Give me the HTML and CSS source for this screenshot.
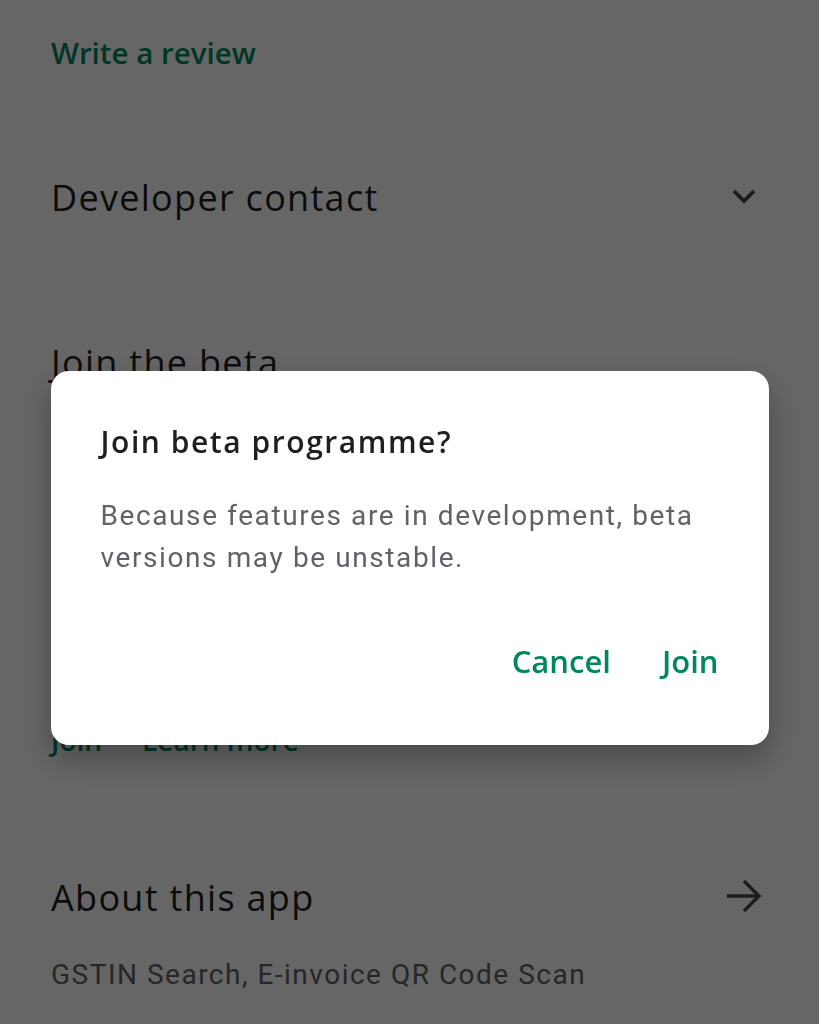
FILE: index.html
```html
<!DOCTYPE html>
<html lang="en">
<head>
    <meta charset="UTF-8">
    <meta name="viewport" content="width=device-width, initial-scale=1.0">
    <title>Join beta programme</title>
    <link rel="stylesheet" href="styles.css">
</head>
<body>
    <div class="page">
        <div class="link-row">Write a review</div>

        <div class="section-row">
            <span class="section-title">Developer contact</span>
            <svg class="chevron" viewBox="0 0 32 20" width="32" height="20">
                <path d="M8 4 18 14 28 4" fill="none" stroke="#4a4a4a" stroke-width="3.8"/>
            </svg>
        </div>

        <div class="beta">
            <div class="section-row beta-head">
                <span class="section-title">Join the beta</span>
            </div>
            <p class="beta-text">Try new features before they're officially released and give your feedback to the developer.</p>
            <div class="beta-links">
                <span>Join</span>
                <span>Learn more</span>
            </div>
        </div>

        <div class="section-row about">
            <span class="section-title">About this app</span>
            <svg class="arrow" viewBox="0 0 40 40" width="40" height="40">
                <path d="M5 19H36M22 4 37 19 22 34" fill="none" stroke="#4a4a4a" stroke-width="3.4"/>
            </svg>
        </div>
        <p class="about-text">GSTIN Search, E-invoice QR Code Scan</p>
    </div>

    <div class="overlay">
        <div class="dialog">
            <h2 class="dialog-title">Join beta programme?</h2>
            <p class="dialog-text">Because features are in development, beta versions may be unstable.</p>
            <div class="dialog-actions">
                <button class="text-btn">Cancel</button>
                <button class="text-btn">Join</button>
            </div>
        </div>
    </div>
</body>
</html>
```

FILE: styles.css
```css
html, body { margin: 0; padding: 0; background: #fff; }
body { font-family: Roboto, "Noto Sans", sans-serif; color: #1f1f1f; }

.page { padding: 0 51px; }

.link-row { height: 104px; display: flex; align-items: center; font-family: "Open Sans", sans-serif; font-size: 29.5px; font-weight: 600; color: #01875f; }

.section-row { display: flex; align-items: center; justify-content: space-between; height: 80px; margin-top: 53px; }
.section-title { font-family: "Open Sans", sans-serif; font-size: 36px; font-weight: 400; letter-spacing: 1.3px; color: #1f1f1f; }
.chevron { margin-right: 10px; }
.arrow { margin-right: 6px; }

.beta { margin-top: 85px; height: 438px; display: flex; flex-direction: column; }
.beta-head { margin-top: 0; }
.beta-text { font-size: 28px; line-height: 42px; color: #5f6368; letter-spacing: 1.5px; margin: 20px 0 0; }
.beta-links { display: flex; gap: 40px; font-family: "Open Sans", sans-serif; font-size: 28px; font-weight: 600; line-height: 40px; color: #01875f; margin-top: auto; }

.about { margin-top: 97px; }
.about-text { margin: 18px 0 0; font-size: 28px; line-height: 40px; color: #5f6368; letter-spacing: 1.5px; }

.overlay { position: fixed; inset: 0; background: rgba(0, 0, 0, 0.6); display: flex; justify-content: center; align-items: flex-start; padding-top: 371px; }

.dialog { width: 718px; height: 374px; box-sizing: border-box; background: #fff; border-radius: 18px; padding: 52px 50px 0; box-shadow: 0 14px 32px rgba(0, 0, 0, 0.3); display: flex; flex-direction: column; }
.dialog-title { margin: 0; font-family: "Open Sans", sans-serif; font-size: 30px; font-weight: 600; letter-spacing: 1.55px; color: #1f1f1f; line-height: 38px; }
.dialog-text { margin: 34px 0 0; font-size: 28px; line-height: 42px; color: #5f6368; letter-spacing: 1.6px; }
.dialog-actions { display: flex; justify-content: flex-end; gap: 27px; margin-top: auto; margin-bottom: 55px; margin-right: -12px; }
.text-btn { background: none; border: none; padding: 8px 12px; font-family: "Open Sans", sans-serif; font-size: 31px; font-weight: 600; color: #01875f; cursor: pointer; }
```
